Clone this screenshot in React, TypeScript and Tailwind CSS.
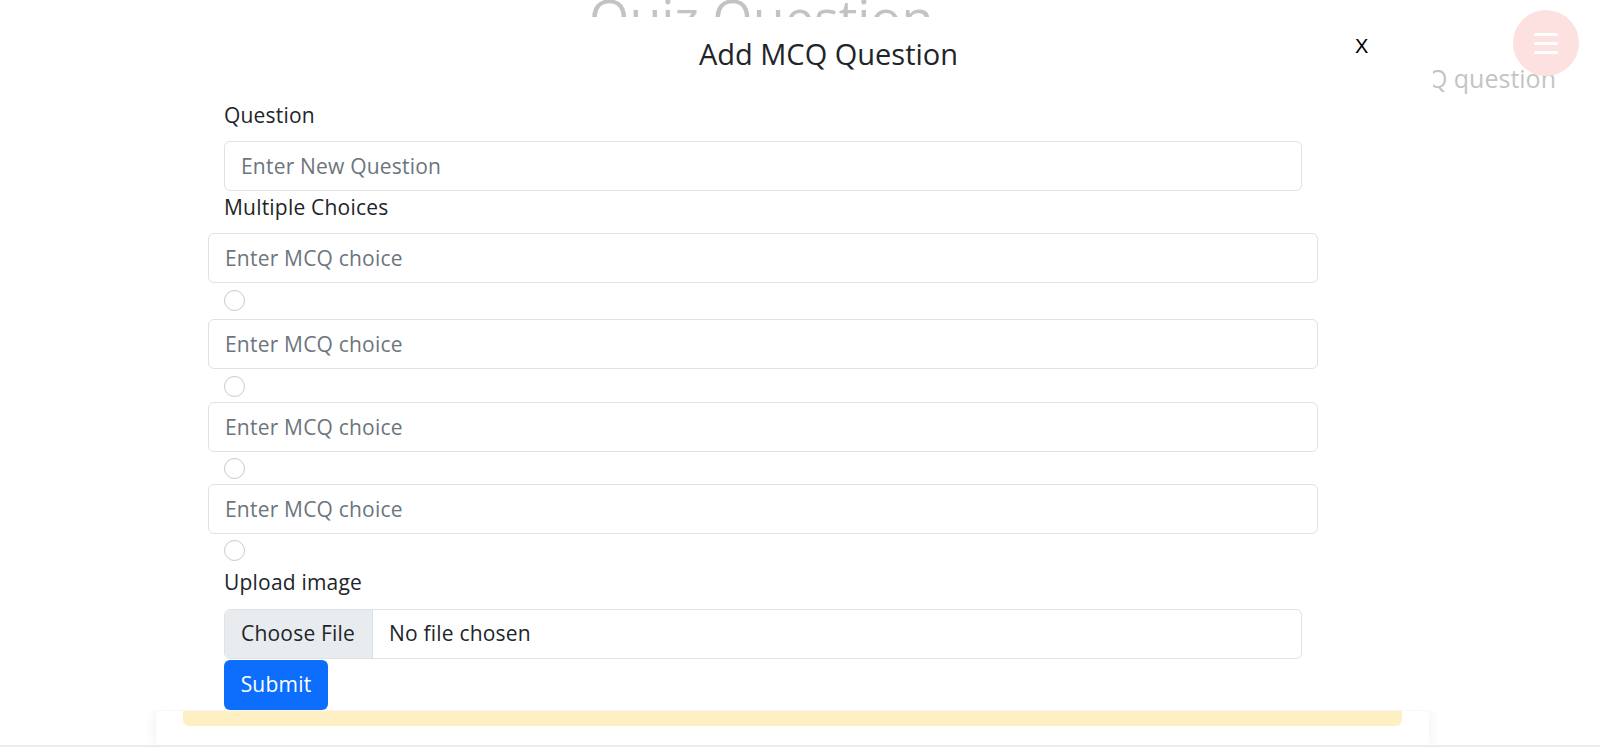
const choices = [
  { radio: "mt-[7px]", after: "mb-[8px]" },
  { radio: "mt-[7px]", after: "mb-[5px]" },
  { radio: "mt-[6px]", after: "mb-[5px]" },
  { radio: "mt-[6px]", after: "mb-[6px]" },
];

export default function App() {
  return (
    <main className="relative w-[1600px] h-[747px] overflow-hidden bg-white font-['Open_Sans',sans-serif] text-[#212529]">

      {/* ── page behind the modal ─────────────────────────── */}
      <div className="flex flex-col h-[711px]">
        <h1 className="-mt-[9px] pl-[589px] text-[52px] leading-none text-[#c3c3c3]">Quiz Question</h1>
        <div className="mt-[19px] flex justify-end pr-[44px]">
          <span className="text-[25px] leading-[32px] text-[#c4c4c4]">Add MCQ question</span>
        </div>
      </div>
      <div className="ml-[156px] w-[1273px] h-[34px] bg-white px-[27px] shadow-[0_0_14px_rgba(0,0,0,0.07)]">
        <div className="h-[15px] rounded-b-[6px] bg-[#fff0c4]"></div>
      </div>
      <div className="h-[2px] bg-[#ececec]"></div>

      {/* floating menu button */}
      <button className="absolute left-[1513px] top-[10px] w-[66px] h-[66px] rounded-full bg-[#fde0e0] flex flex-col items-center justify-center gap-[6px]">
        <span className="block w-[24px] h-[3px] bg-white rounded-sm"></span>
        <span className="block w-[24px] h-[3px] bg-white rounded-sm"></span>
        <span className="block w-[24px] h-[3px] bg-white rounded-sm"></span>
      </button>

      {/* ── modal ────────────────────────────────────────── */}
      <div className="absolute left-0 top-[17px] w-[1433px] h-[693px] bg-white pl-[224px] pt-[19px]">
        <div className="relative">
          <h4 className="text-center text-[29px] leading-[36px]">Add MCQ Question</h4>
          <button className="absolute left-[1131px] top-0 font-['Liberation_Sans',sans-serif] text-[20px] leading-[20px] text-black">X</button>
        </div>

        <div className="w-[1078px] text-[21px] tracking-[0.2px]">
          <label className="block mt-[28px] mb-[11px] leading-[30px]">Question</label>
          <input
            className="block w-full h-[50px] px-4 border border-[#dee2e6] rounded-[6px] outline-none placeholder:text-[#6c757d]"
            placeholder="Enter New Question"
          />

          <label className="block mt-[1px] mb-[11px] leading-[30px]">Multiple Choices</label>
          <div className="-mx-4">
            {choices.map((c, i) => (
              <div key={i} className={c.after}>
                <input
                  className="block w-full h-[50px] px-4 border border-[#dee2e6] rounded-[6px] outline-none placeholder:text-[#6c757d]"
                  placeholder="Enter MCQ choice"
                />
                <div className={`ml-4 w-[21px] h-[21px] rounded-full border border-[#c5c9cd] bg-white ${c.radio}`}></div>
              </div>
            ))}
          </div>

          <label className="block mb-[12px] leading-[30px]">Upload image</label>
          <div className="flex h-[50px] border border-[#dee2e6] rounded-[6px] overflow-hidden">
            <span className="flex items-center w-[148px] px-4 bg-[#e9ecef] border-r border-[#dee2e6]">Choose File</span>
            <span className="flex items-center px-4">No file chosen</span>
          </div>
          <button className="block mt-[1px] w-[104px] h-[50px] rounded-[6px] bg-[#0d6efd] text-white">Submit</button>
        </div>
      </div>
    </main>
  );
}
